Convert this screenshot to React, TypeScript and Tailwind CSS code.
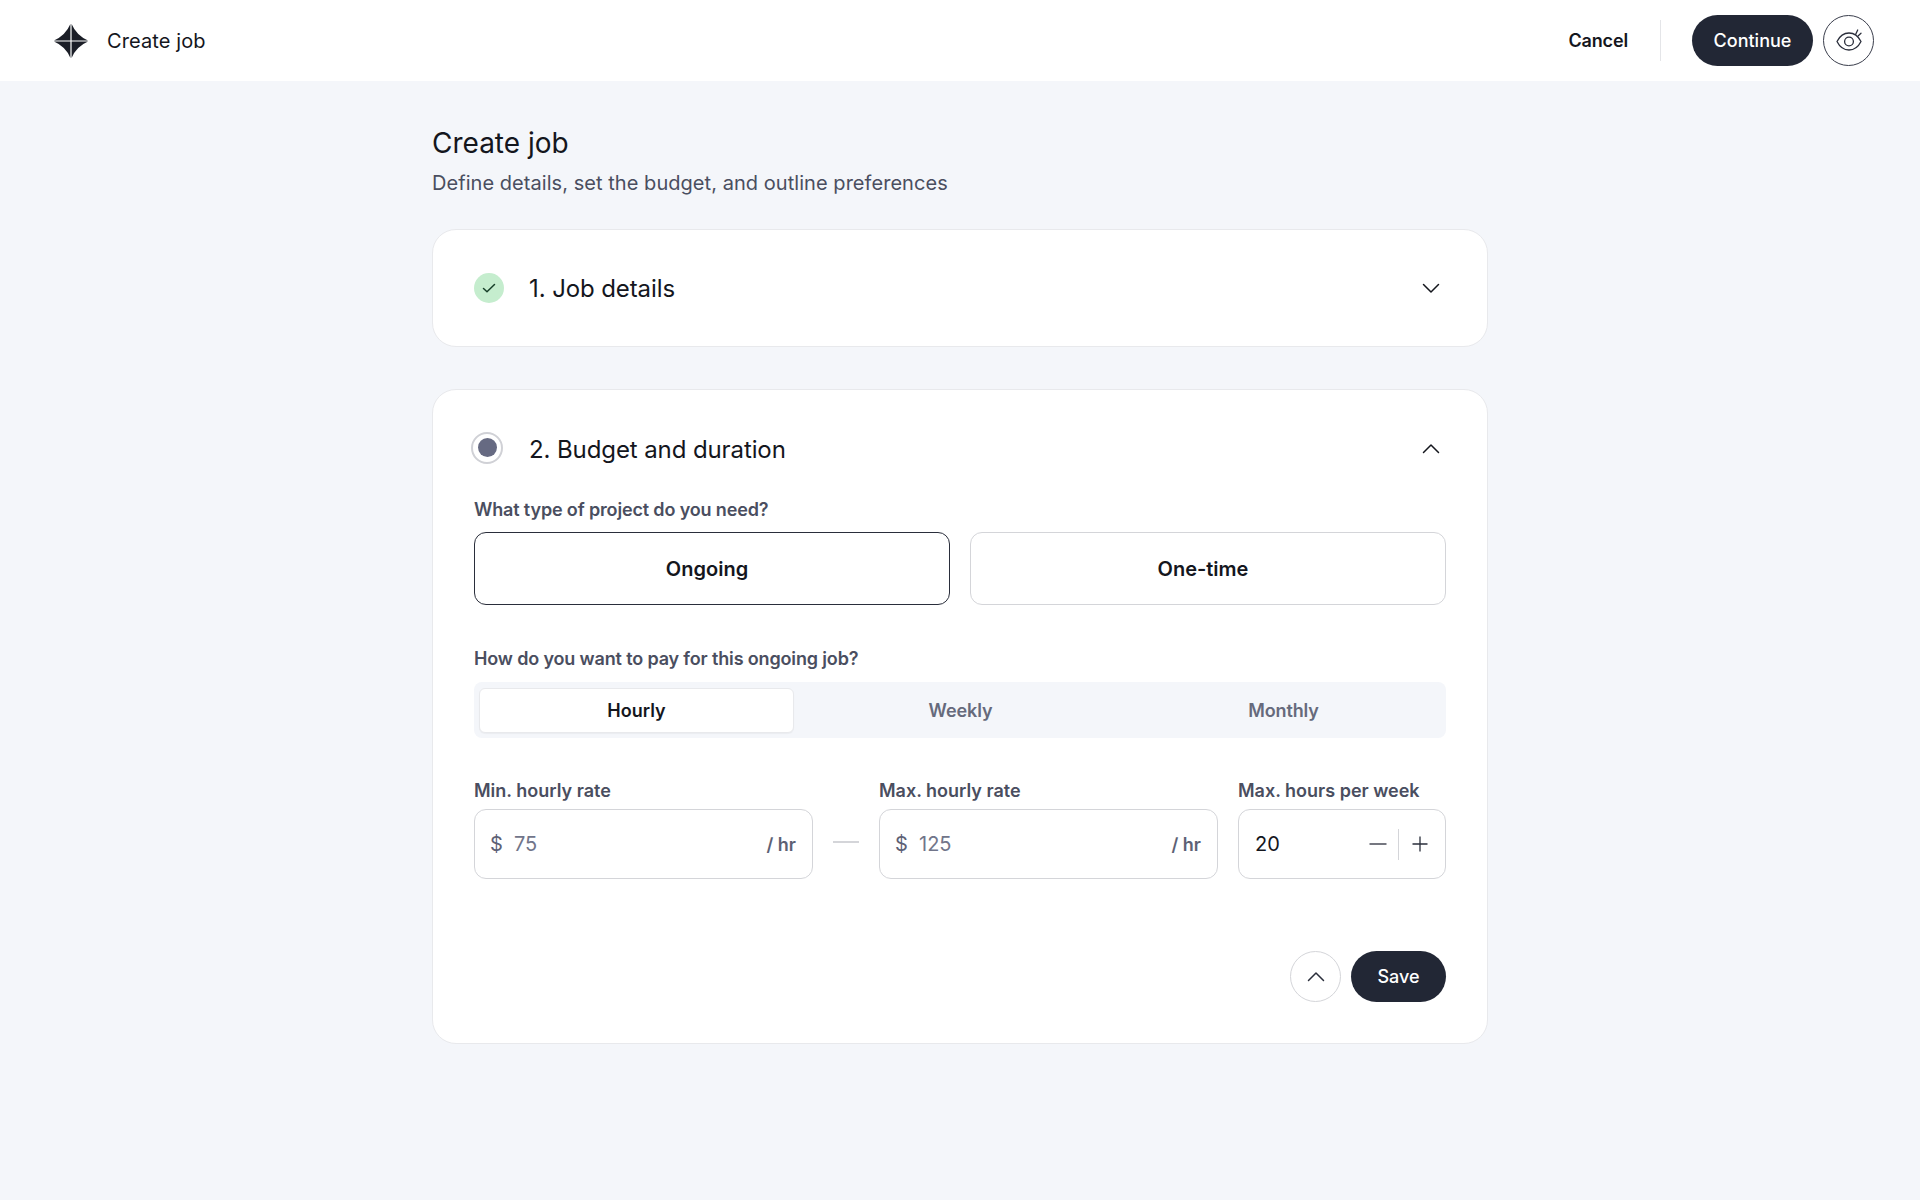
import React from "react";

const Chevron = ({ up = false, className = "" }: { up?: boolean; className?: string }) => (
  <svg width="24" height="24" viewBox="0 0 24 24" fill="none" stroke="currentColor" strokeWidth="1.5" strokeLinecap="round" strokeLinejoin="round" className={className}>
    <path d={up ? "M4.500 15.500l7.500-7.500 7.500 7.500" : "M4.500 8.500l7.500 7.500 7.500-7.500"} />
  </svg>
);

const Logo = () => (
  <svg width="36" height="36" viewBox="0 0 36 36" fill="#1b1e27">
    <path d="M17.400 1Q12.500 12.500 1 17.400H17.400Z" />
    <path d="M18.600 1Q23.500 12.500 35 17.400H18.600Z" />
    <path d="M17.400 35Q12.500 23.500 1 18.600H17.400Z" />
    <path d="M18.600 35Q23.500 23.500 35 18.600H18.600Z" />
  </svg>
);

const RateField = ({ label, value }: { label: string; value: string }) => (
  <div className="flex w-[339px] flex-col gap-[6px]">
    <label className="text-[18px] leading-[24px] font-semibold text-[#4a4e60]">{label}</label>
    <div className="flex h-[70px] items-center rounded-[12px] border border-[#d4d5d9] bg-white pr-[16px] pl-[15px] text-[20px]">
      <span className="w-[24px] text-[#5d6175]">$</span>
      <span className="flex-1 text-[#71758a]">{value}</span>
      <span className="text-[18px] font-semibold text-[#5d6175]">/ hr</span>
    </div>
  </div>
);

export default function App() {
  return (
    <div className="min-h-[1200px] bg-[#f4f6fa] font-['Inter',sans-serif] text-[#14161d]">
      <header className="flex h-[81px] items-center justify-between bg-white pr-[46px] pl-[53px]">
        <div className="flex items-center gap-[18px]">
          <Logo />
          <span className="text-[20px] font-normal tracking-[0.1px]">Create job</span>
        </div>
        <div className="flex items-center">
          <button className="text-[18px] font-semibold tracking-[-0.15px]">Cancel</button>
          <div className="mr-[31px] ml-[32px] h-[41px] w-px bg-[#e4e5e8]" />
          <button className="mr-[10px] h-[51px] w-[121px] rounded-full bg-[#222735] text-[18px] font-medium text-white">Continue</button>
          <button className="flex h-[51px] w-[51px] items-center justify-center rounded-full border border-[#3a3e4c] text-[#2a2e3b]">
            <svg width="28" height="28" viewBox="0 0 28 28" fill="none" stroke="currentColor" strokeWidth="1.300" strokeLinecap="round" strokeLinejoin="round">
              <path d="M2 14.500C4.500 9.500 9 6 14 6s9.500 3.500 12 8.500C23.500 19.500 19 23 14 23S4.500 19.500 2 14.500z" />
              <circle cx="14" cy="14.500" r="4.400" />
              <path d="M20.700 7.300L22.700 3M23.300 8.700L26 6.300" />
            </svg>
          </button>
        </div>
      </header>

      <main className="mx-auto w-[1056px] pt-[44px]">
        <h1 className="text-[28px] leading-[36px] font-normal">Create job</h1>
        <p className="mt-[8px] text-[20px] leading-[28px] tracking-[0.05px] text-[#4a4e60]">Define details, set the budget, and outline preferences</p>

        <section className="mt-[32px] flex h-[118px] items-center rounded-[24px] border border-[#e8e9ec] bg-white pr-[44px] pl-[41px]">
          <span className="flex h-[30px] w-[30px] items-center justify-center rounded-full bg-[#c5edce] text-[#173f29]">
            <svg width="16" height="16" viewBox="0 0 16 16" fill="none" stroke="currentColor" strokeWidth="1.500" strokeLinecap="round" strokeLinejoin="round"><path d="M2.500 8.500l3.500 3.200L13.500 4.500" /></svg>
          </span>
          <h2 className="ml-[25px] flex-1 pt-[2px] text-[24px] font-normal tracking-[-0.1px]">1. Job details</h2>
          <Chevron />
        </section>

        <section className="mt-[42px] rounded-[24px] border border-[#e8e9ec] bg-white pt-[41px] pr-[44px] pb-[41px] pl-[41px]">
          <div className="flex h-[36px] items-center">
            <span className="-mt-[3px] -ml-[3px] flex h-[32px] w-[32px] items-center justify-center rounded-full border-[2px] border-[#d0d1d6] bg-white">
              <span className="h-[19px] w-[19px] rounded-full bg-[#666a82]" />
            </span>
            <h2 className="ml-[26px] flex-1 pt-[2px] text-[24px] font-normal tracking-[-0.1px]">2. Budget and duration</h2>
            <Chevron up />
          </div>

          <div className="-mr-[3px]">
            <p className="mt-[31px] text-[18px] leading-[24px] font-semibold tracking-[-0.15px] text-[#4a4e60]">What type of project do you need?</p>
            <div className="mt-[10px] flex gap-[20px]">
              <button className="h-[73px] flex-1 rounded-[12px] border-[1.5px] border-[#2a2e3b] bg-white pr-[10px] text-[20px] font-semibold">Ongoing</button>
              <button className="h-[73px] flex-1 rounded-[12px] border border-[#d4d5d9] bg-white pr-[10px] text-[20px] font-semibold">One-time</button>
            </div>

            <p className="mt-[42px] text-[18px] leading-[24px] font-semibold tracking-[-0.15px] text-[#4a4e60]">How do you want to pay for this ongoing job?</p>
            <div className="mt-[11px] flex h-[56px] items-center rounded-[8px] bg-[#f4f6fa] pl-[5px]">
              <div className="flex h-[45px] w-[315px] items-center justify-center rounded-[6px] border border-[#e8e9ec] bg-white text-[18px] font-semibold shadow-[0_1px_1px_rgba(0,0,0,0.04)]">Hourly</div>
              <div className="ml-[5px] flex h-[45px] w-[323px] items-center justify-center text-[18px] font-semibold tracking-[-0.1px] text-[#666a7c]">Weekly</div>
              <div className="flex h-[45px] w-[323px] items-center justify-center text-[18px] font-semibold tracking-[-0.1px] text-[#666a7c]">Monthly</div>
            </div>

            <div className="mt-[41px] flex">
              <RateField label="Min. hourly rate" value="75" />
              <div className="flex w-[66px] items-center justify-center pt-[26px]">
                <span className="h-[2px] w-[26px] bg-[#d4d5d9]" />
              </div>
              <RateField label="Max. hourly rate" value="125" />
              <div className="ml-[20px] flex flex-1 flex-col gap-[6px]">
                <label className="text-[18px] leading-[24px] font-semibold text-[#4a4e60]">Max. hours per week</label>
                <div className="flex h-[70px] items-center rounded-[12px] border border-[#d4d5d9] bg-white pr-[17px] pl-[16px] text-[20px]">
                  <span className="flex-1">20</span>
                  <svg width="18" height="18" viewBox="0 0 18 18" stroke="#2a2e3b" strokeWidth="1.300" fill="none"><path d="M0.500 9h17" /></svg>
                  <span className="mr-[13px] ml-[11px] h-[31px] w-px bg-[#d4d5d9]" />
                  <svg width="16" height="16" viewBox="0 0 16 16" stroke="#2a2e3b" strokeWidth="1.300" fill="none"><path d="M0.500 8h15M8 0.500v15" /></svg>
                </div>
              </div>
            </div>

            <div className="mt-[72px] flex justify-end gap-[10px]">
              <button className="flex h-[51px] w-[51px] items-center justify-center rounded-full border border-[#d4d5d9] bg-white text-[#2a2e3b]"><Chevron up /></button>
              <button className="h-[51px] w-[95px] rounded-full bg-[#222735] text-[18px] font-medium text-white">Save</button>
            </div>
          </div>
        </section>
      </main>
    </div>
  );
}
